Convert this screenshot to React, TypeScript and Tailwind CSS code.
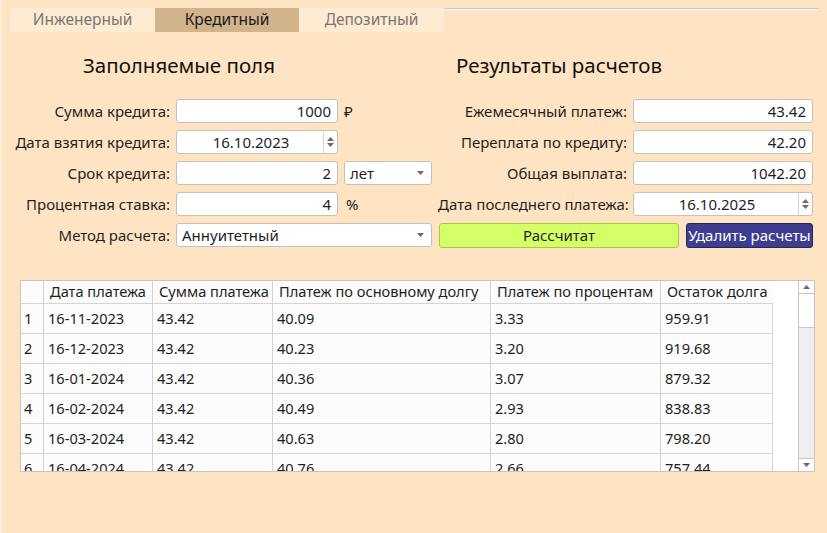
import React from "react";

const rows = [
  ["1", "16-11-2023", "43.42", "40.09", "3.33", "959.91"],
  ["2", "16-12-2023", "43.42", "40.23", "3.20", "919.68"],
  ["3", "16-01-2024", "43.42", "40.36", "3.07", "879.32"],
  ["4", "16-02-2024", "43.42", "40.49", "2.93", "838.83"],
  ["5", "16-03-2024", "43.42", "40.63", "2.80", "798.20"],
  ["6", "16-04-2024", "43.42", "40.76", "2.66", "757.44"],
];

function Field({ value, width }: { value: string; width: string }) {
  return (
    <div className={`${width} h-6 bg-white border border-[#c4c0bb] rounded-[3px] flex items-center justify-end pr-[6px] text-[#1f1f1f]`}>
      {value}
    </div>
  );
}

function DateField({ value, width }: { value: string; width: string }) {
  return (
    <div className={`${width} h-6 bg-white border border-[#c4c0bb] rounded-[3px] flex items-center`}>
      <span className="flex-1 text-center pl-[2px]">{value}</span>
      <div className="w-[14px] h-full border-l border-[#d6d2cd] flex flex-col items-center justify-center gap-[2px]">
        <svg width="7" height="4" viewBox="0 0 7 4"><path d="M0 4 L3.5 0 L7 4Z" fill="#6a6a6a" /></svg>
        <svg width="7" height="4" viewBox="0 0 7 4"><path d="M0 0 L3.5 4 L7 0Z" fill="#6a6a6a" /></svg>
      </div>
    </div>
  );
}

function Combo({ value, width }: { value: string; width: string }) {
  return (
    <div className={`${width} h-6 bg-white border border-[#c4c0bb] rounded-[3px] flex items-center justify-between pl-[5px] pr-[7px]`}>
      <span>{value}</span>
      <svg width="7" height="4" viewBox="0 0 7 4"><path d="M0 0 L3.5 4 L7 0Z" fill="#6a6a6a" /></svg>
    </div>
  );
}

function Label({ text, width }: { text: string; width: string }) {
  return <span className={`${width} text-right shrink-0 whitespace-nowrap`}>{text}</span>;
}

export default function App() {
  const cols = ["w-[22px]", "w-[109px]", "w-[120px]", "w-[218px]", "w-[170px]", "w-[113px]"];
  return (
    <div
      className="w-[827px] h-[533px] bg-[#ffe4c4] border-l-2 border-[#ffecd6] text-[15px] text-[#1f1f1f] overflow-hidden flex flex-col"
      style={{ fontFamily: "'Noto Sans', 'DejaVu Sans', sans-serif" }}
    >
      {/* tabs */}
      <div className="flex items-start mt-[8px] ml-[8px] mr-[8px]">
        <div className="w-[145px] h-6 bg-[#ffebd2] text-[#777] flex items-center justify-center text-[15.5px]">Инженерный</div>
        <div className="w-[144px] h-6 bg-[#d2b48c] text-[#1a1a1a] flex items-center justify-center text-[15.5px]">Кредитный</div>
        <div className="w-[145px] h-6 bg-[#ffebd2] text-[#777] flex items-center justify-center text-[15.5px]">Депозитный</div>
        <div className="flex-1 border-t border-[#c4c4c4] shadow-[0_1px_0_#ffffff]" />
      </div>

      {/* headings */}
      <div className="flex mt-[19px] h-[28px] items-center text-[20.5px] text-[#111]">
        <span className="ml-[81px] w-[373px]">Заполняемые поля</span>
        <span>Результаты расчетов</span>
      </div>

      {/* form */}
      <div className="flex mt-[20px]">
        <div className="w-[436px] flex flex-col gap-[7px]">
          <div className="flex items-center gap-[6px] h-6">
            <Label text="Сумма кредита:" width="w-[168px]" />
            <Field value="1000" width="w-[162px]" />
            <span>₽</span>
          </div>
          <div className="flex items-center gap-[6px] h-6">
            <Label text="Дата взятия кредита:" width="w-[168px]" />
            <DateField value="16.10.2023" width="w-[162px]" />
          </div>
          <div className="flex items-center gap-[6px] h-6">
            <Label text="Срок кредита:" width="w-[168px]" />
            <Field value="2" width="w-[162px]" />
            <Combo value="лет" width="w-[88px]" />
          </div>
          <div className="flex items-center gap-[6px] h-6">
            <Label text="Процентная ставка:" width="w-[168px]" />
            <Field value="4" width="w-[162px]" />
            <span className="ml-[2px]">%</span>
          </div>
          <div className="flex items-center gap-[6px] h-6">
            <Label text="Метод расчета:" width="w-[168px]" />
            <Combo value="Аннуитетный" width="w-[256px]" />
          </div>
        </div>
        <div className="flex flex-col gap-[7px]">
          <div className="flex items-center gap-[6px] h-6">
            <Label text="Ежемесячный платеж:" width="w-[189px]" />
            <Field value="43.42" width="w-[180px]" />
          </div>
          <div className="flex items-center gap-[6px] h-6">
            <Label text="Переплата по кредиту:" width="w-[189px]" />
            <Field value="42.20" width="w-[180px]" />
          </div>
          <div className="flex items-center gap-[6px] h-6">
            <Label text="Общая выплата:" width="w-[189px]" />
            <Field value="1042.20" width="w-[180px]" />
          </div>
          <div className="flex items-center gap-[6px] h-6">
            <Label text="Дата последнего платежа:" width="w-[189px]" />
            <DateField value="16.10.2025" width="w-[180px]" />
          </div>
          <div className="flex items-center gap-[7px] h-[25px] ml-[1px]">
            <div className="w-[240px] h-[25px] bg-[#d4ff66] border border-[#a3c94a] rounded-[3px] flex items-center justify-center text-[#1f1f1f]">
              Рассчитат
            </div>
            <div className="w-[127px] h-[25px] bg-[#3e3e90] border border-[#26265e] rounded-[3px] flex items-center justify-center text-white">
              Удалить расчеты
            </div>
          </div>
        </div>
      </div>

      {/* table */}
      <div className="ml-[18px] mt-[32px] w-[795px] h-[192px] bg-white border border-[#c6c6c6] flex overflow-hidden text-[14.6px]">
        <div className="flex-1 flex flex-col">
          <div className="flex h-[22px] shrink-0">
            {["", "Дата платежа", "Сумма платежа", "Платеж по основному долгу", "Платеж по процентам", "Остаток долга"].map((h, i) => (
              <div key={i} className={`${cols[i]} h-full bg-[#fcfcfc] flex items-center pl-[6px] whitespace-nowrap ${i > 0 ? "border-l border-[#d4d4d4]" : ""}`}>
                {h}
              </div>
            ))}
          </div>
          {rows.map((r) => (
            <div key={r[0]} className="flex h-[30px] shrink-0">
              {r.map((c, i) => (
                <div
                  key={i}
                  className={`${cols[i]} h-full flex items-center border-t border-[#d4d4d4] ${i === 0 ? "pl-[3px] bg-[#fcfcfc]" : "pl-[4px] border-l bg-[#fcfcfc]"} ${i === 5 ? "border-r" : ""}`}
                >
                  {c}
                </div>
              ))}
            </div>
          ))}
        </div>
        <div className="w-[16px] h-full border-l border-[#c6c6c6] flex flex-col">
          <div className="h-[13px] border-b border-[#c6c6c6] flex items-center justify-center">
            <svg width="7" height="4" viewBox="0 0 7 4"><path d="M0 4 L3.5 0 L7 4Z" fill="#6a6a6a" /></svg>
          </div>
          <div className="h-[34px] bg-white border-b border-[#c6c6c6]" />
          <div className="flex-1 bg-[#efefef]" />
          <div className="h-[13px] border-t border-[#c6c6c6] flex items-center justify-center">
            <svg width="7" height="4" viewBox="0 0 7 4"><path d="M0 0 L3.5 4 L7 0Z" fill="#6a6a6a" /></svg>
          </div>
        </div>
      </div>
    </div>
  );
}
